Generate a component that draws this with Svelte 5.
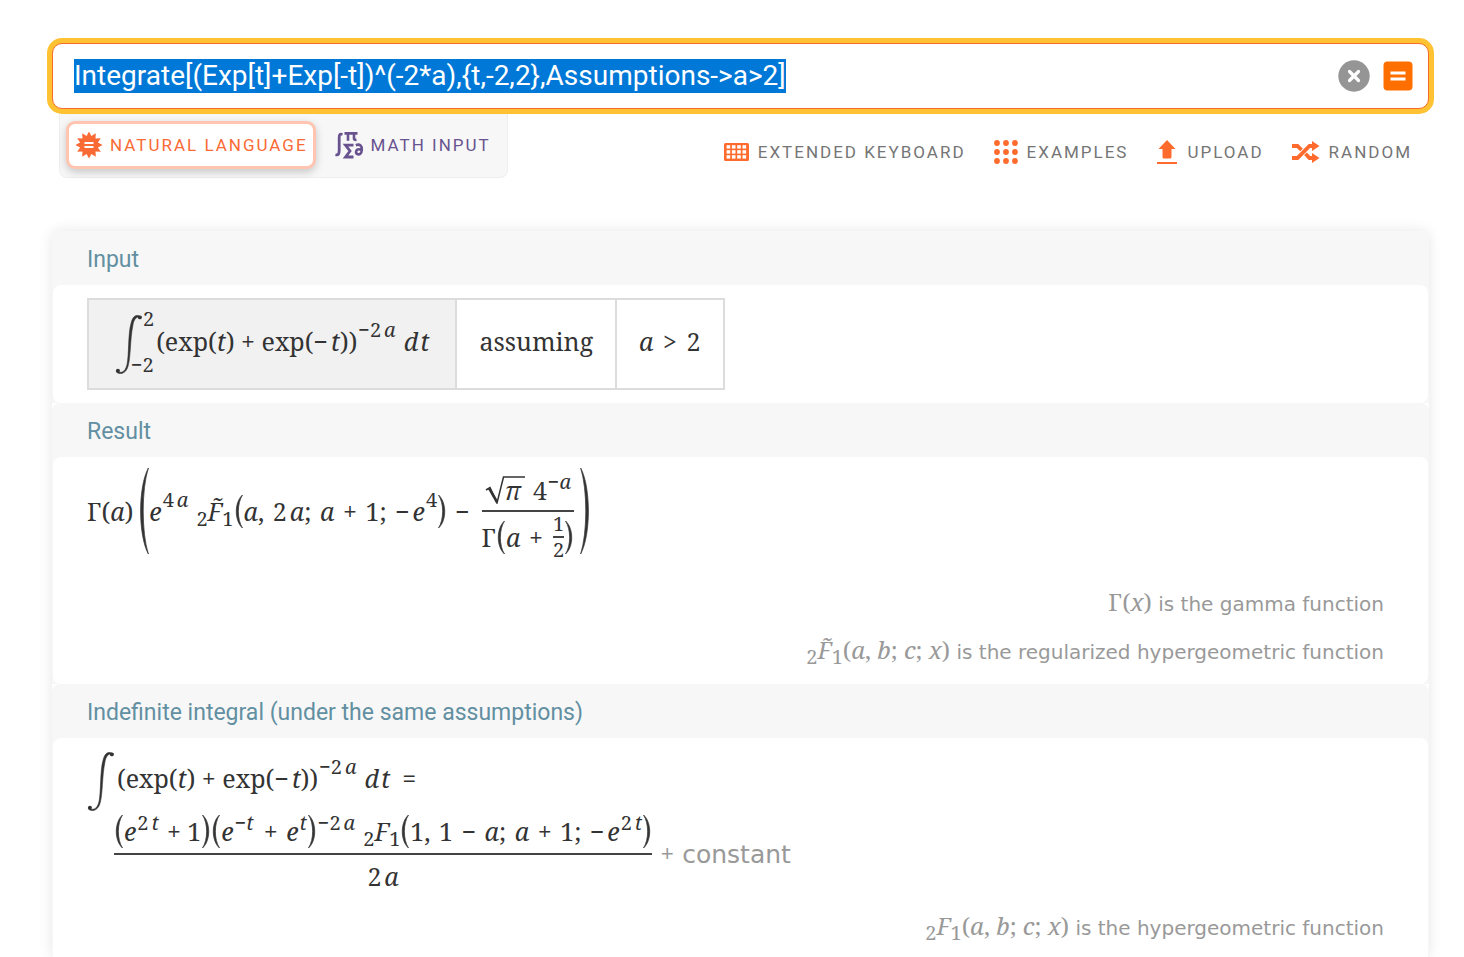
<script>
  import { onMount } from 'svelte';

  let query = $state('Integrate[(Exp[t]+Exp[-t])^(-2*a),{t,-2,2},Assumptions->a>2]');
  let field;

  // Twelve-pointed burst of the natural-language tab.
  const burst = Array.from({ length: 24 }, (_, i) => {
    const r = i % 2 ? 9.2 : 13.6;
    const t = (i * Math.PI) / 12 - Math.PI / 2;
    return `${(14 + r * Math.cos(t)).toFixed(2)},${(14 + r * Math.sin(t)).toFixed(2)}`;
  }).join(' ');

  const dots = [0, 1, 2].flatMap((r) => [0, 1, 2].map((c) => [3 + c * 9, 3 + r * 9]));
  const keys = [0, 1, 2].flatMap((r) => [0, 1, 2, 3].map((c) => [2.6 + c * 5.3, 3.2 + r * 5]));

  onMount(() => {
    field.focus();
    field.select();
  });
</script>

{#snippet integral()}
  <svg class="integral" viewBox="0 0 28 62" aria-hidden="true">
    <path d="M1 58C5 62 10 61 12 52C14 44 13 20 16 10C18 1 22 0 27 3C22 2 19 5 18 12C15 26 16 44 13 54C11 62 4 63 1 60Z" fill="currentColor" stroke="currentColor" stroke-width=".6" />
    <circle cx="2.600" cy="58.500" r="2" fill="currentColor" /><circle cx="25.200" cy="3.500" r="2" fill="currentColor" />
  </svg>
{/snippet}

{#snippet paren(side, size)}
  <svg class={['paren', side, size]} viewBox="0 0 8 32" preserveAspectRatio="none" aria-hidden="true">
    <path d="M7.500 0C-.8 7 -.8 25 7.500 32C2 24 2 8 7.500 0Z" fill="currentColor" stroke="currentColor" stroke-width=".7" vector-effect="non-scaling-stroke" />
  </svg>
{/snippet}

{#snippet integrand()}
  <span class="run">(exp(<i>t</i>) + exp(−<i class="thin">t</i>))<sup>−2<i class="thin">a</i></sup><i class="med">d</i><i class="hair">t</i></span>
{/snippet}

<main>
  <form class="search" onsubmit={(e) => e.preventDefault()}>
    <input bind:this={field} bind:value={query} type="text" aria-label="Query" spellcheck="false" />
    <button type="button" aria-label="Clear" onclick={() => (query = '')}>
      <svg width="32" height="32" viewBox="0 0 32 32"><circle cx="16" cy="16" r="15.700" fill="#959595" /><path d="M11.500 11.500L20.500 20.500M20.500 11.500L11.500 20.500" stroke="#fff" stroke-width="3.200" stroke-linecap="round" /></svg>
    </button>
    <button type="submit" aria-label="Compute">
      <svg width="30" height="30" viewBox="0 0 30 30"><rect x=".5" y=".5" width="29" height="29" rx="4" fill="#ff6f00" /><path d="M7.500 12H22.500M7.500 18H22.500" stroke="#fff" stroke-width="3" /></svg>
    </button>
  </form>

  <div class="bar">
    <div class="tabs">
      <button type="button" class="tab active">
        <svg width="28" height="28" viewBox="0 0 28 28"><polygon points={burst} fill="currentColor" /><path d="M9.500 12H18.500M9.500 16H18.500" stroke="#fff" stroke-width="1.800" /></svg>
        Natural Language
      </button>
      <button type="button" class="tab">
        <svg width="30" height="28" viewBox="0 0 30 28" fill="none" stroke="currentColor" stroke-width="2.800">
          <path d="M8.500 3.500C5.500 2.500 5.200 4 5.200 7V19C5.200 23 4.500 24.500 1.500 23.700" />
          <path d="M10.500 2.400H23.500M14 2.500V9.800M20 2.500V7.500Q20 9.200 22.500 8.800" stroke-width="2.600" />
          <path d="M19.500 14.200H11.500L16 20L11.500 26H19.500" stroke-width="2.800" />
          <path d="M21.800 14.200C26 12.500 28.200 15 27.800 19C27.500 23 25.500 23.700 23.800 23.300C21 22.500 21.800 18.300 25 18.300Q27 18.300 27.600 19.500" stroke-width="2.600" />
        </svg>
        Math Input
      </button>
    </div>
    <nav class="tools">
      <button type="button" class="tool">
        <svg width="25" height="20" viewBox="0 0 25 20"><rect y="1" width="25" height="18" rx="1.500" fill="#ff6b2c" />{#each keys as [x, y]}<rect {x} {y} width="3.600" height="3.400" fill="#fff" />{/each}</svg>
        Extended Keyboard
      </button>
      <button type="button" class="tool">
        <svg width="24" height="24" viewBox="0 0 24 24" fill="#ff6b2c">{#each dots as [cx, cy]}<circle {cx} {cy} r="2.900" />{/each}</svg>
        Examples
      </button>
      <button type="button" class="tool">
        <svg width="22" height="26" viewBox="0 0 22 26" fill="#ff6b2c"><path d="M11 1L19.500 10H15.500V18Q15.500 19.500 14 19.500H8Q6.500 19.500 6.500 18V10H2.500ZM1 23H21V25H1Z" /></svg>
        Upload
      </button>
      <button type="button" class="tool">
        <svg width="28" height="22" viewBox="0 0 28 22"><path d="M0 5H5.500L9.500 9M13.500 12.800L17.500 17H21M0 17H5.500L17.500 5H21" fill="none" stroke="#ff6b2c" stroke-width="3.800" /><path d="M20 0L27.500 5L20 10ZM20 12L27.500 17L20 22Z" fill="#ff6b2c" /></svg>
        Random
      </button>
    </nav>
  </div>

  <div class="card">
    <section>
      <h2>Input</h2>
      <div class="pod">
        <table>
          <tbody>
            <tr>
              <td class="shade">
                <span class="row">
                  {@render integral()}
                  <span class="limits"><span class="upper">2</span><span>−2</span></span>
                  {@render integrand()}
                </span>
              </td>
              <td><span class="run">assuming</span></td>
              <td><span class="run"><i>a</i> <span class="rel">&gt;</span> 2</span></td>
            </tr>
          </tbody>
        </table>
      </div>
    </section>

    <section>
      <h2>Result</h2>
      <div class="pod">
        <div class="row result">
          <span>Γ(<i>a</i>)</span>
          {@render paren('left', 'big')}
          <span><i>e</i><sup>4<i class="thin">a</i></sup><span class="med"><sub>2</sub><i>F̃</i><sub>1</sub></span></span>
          {@render paren('left', 'mid')}
          <span><i>a</i><span class="sep">,</span> 2<i class="thin">a</i><span class="sep">;</span> <i>a</i> <span class="op">+</span> 1<span class="sep">;</span> −<i class="thin">e</i><sup>4</sup></span>
          {@render paren('right', 'mid')}
          <span class="med">−</span>
          <span class="frac wide">
            <span class="num row">
              <svg class="root" viewBox="0 0 40 28" aria-hidden="true"><path d="M1 14L5 11.500L12 27L18.500 1H40" fill="none" stroke="currentColor" stroke-width="1.500" /><path d="M4 12L12 26" stroke="currentColor" stroke-width="2.600" /></svg>
              <span><i>π</i><span class="wide">4</span><sup>−<i>a</i></sup></span>
            </span>
            <span class="rule"></span>
            <span class="row">
              <span>Γ</span>
              {@render paren('left', 'mid')}
              <span><i>a</i> <span class="op">+</span></span>
              <span class="frac small med"><span>1</span><span class="rule"></span><span>2</span></span>
              {@render paren('right', 'mid')}
            </span>
          </span>
          {@render paren('right', 'big')}
        </div>
        <p class="note"><span class="sym">Γ(<i>x</i>)</span> is the gamma function</p>
        <p class="note"><span class="sym"><sub>2</sub><i>F̃</i><sub>1</sub>(<i>a</i>, <i>b</i>; <i>c</i>; <i>x</i>)</span> is the regularized hypergeometric function</p>
      </div>
    </section>

    <section>
      <h2>Indefinite integral (under the same assumptions)</h2>
      <div class="pod">
        <div class="row lead">
          {@render integral()}
          {@render integrand()}
          <span class="run wide">=</span>
        </div>
        <div class="row answer">
          <span class="frac">
            <span class="num row">
              {@render paren('left', 'mid')}
              <span><i>e</i><sup>2<i class="thin">t</i></sup><span class="med">+ 1</span></span>
              {@render paren('right', 'mid')}
              {@render paren('left', 'mid')}
              <span><i>e</i><sup>−<i>t</i></sup><span class="med"><span class="op">+</span> <i>e</i></span><sup><i>t</i></sup></span>
              {@render paren('right', 'mid')}
              <span><sup>−2<i class="thin">a</i></sup><span class="med"><sub>2</sub><i>F</i><sub>1</sub></span></span>
              {@render paren('left', 'mid')}
              <span>1<span class="sep">,</span> 1 <span class="op">−</span> <i>a</i><span class="sep">;</span> <i>a</i> <span class="op">+</span> 1<span class="sep">;</span> −<i class="thin">e</i><sup>2<i class="thin">t</i></sup></span>
              {@render paren('right', 'mid')}
            </span>
            <span class="rule"></span>
            <span>2<i class="thin">a</i></span>
          </span>
          <span class="constant"><span class="sym">+</span> constant</span>
        </div>
        <p class="note"><span class="sym"><sub>2</sub><i>F</i><sub>1</sub>(<i>a</i>, <i>b</i>; <i>c</i>; <i>x</i>)</span> is the hypergeometric function</p>
      </div>
    </section>
  </div>
</main>

<style>
  :global(body) { background: #fff; }
  main {
    box-sizing: border-box;
    min-height: 100vh;
    padding: 38px 30px 0 47px;
    display: flex;
    flex-direction: column;
    font-family: Roboto, sans-serif;
  }
  button { border: 0; background: none; padding: 0; font: inherit; color: inherit; cursor: pointer; }
  svg { display: block; flex: none; }

  .search {
    display: flex;
    align-items: center;
    gap: 13px;
    height: 64px;
    padding: 0 15px 0 21px;
    border: 1px solid #fa6a2a;
    border-radius: 10px;
    margin: 5px;
    box-shadow: 0 0 0 5px #ffc233;
    position: relative;
    background: #fff;
  }
  input {
    flex: 1;
    min-width: 0;
    border: 0;
    outline: 0;
    padding: 0;
    background: none;
    font: 28px/34px Roboto, sans-serif;
    color: #222;
  }
  input::selection { background: #0078d7; color: #fff; }

  .bar { display: flex; justify-content: space-between; align-items: flex-start; padding: 0 22px 0 12px; }
  .tabs {
    display: flex;
    gap: 18px;
    padding: 7px 16px 8px 6px;
    background: #f7f7f7;
    border: 1px solid #eee;
    border-top: 0;
    border-radius: 0 0 8px 8px;
    color: #68528f;
  }
  .tab, .tool { display: flex; align-items: center; text-transform: uppercase; font-size: 17px; letter-spacing: 2px; white-space: nowrap; }
  .tab { gap: 7px; height: 48px; }
  .active { color: #fa6a35; background: #fff; border: 3px solid #ffc5b1; border-radius: 9px; padding: 0 5px 0 6px; box-shadow: 0 3px 8px #0003; }
  .tools { display: flex; gap: 28px; padding-top: 25px; }
  .tool { gap: 9px; height: 26px; color: #757575; }

  .card { flex: 1; margin: 53px 5px 0; border-radius: 8px 8px 0 0; box-shadow: 0 0 14px #0000001a; background: #fff; }
  section { background: #f7f7f7; border-radius: 8px 8px 0 0; }
  h2 { margin: 0; padding: 3px 35px 0; font: 23px/51px Roboto, sans-serif; color: #628fa1; }
  .pod { background: #fff; border-radius: 8px; padding: 13px 44px 8px 34px; font: 25px/32px "Noto Serif", "Liberation Serif", serif; color: #333; margin: 0 1px; }
  section:last-child .pod { padding-bottom: 5px; border-radius: 8px 8px 0 0; }

  table { border-collapse: collapse; margin-bottom: 5px; }
  td { height: 88px; border: 2px solid #dcdcdc; padding: 0 22px; }
  .shade { background: #f1f1f1; padding: 0 26px; }

  .row { display: flex; align-items: center; white-space: nowrap; }
  .run { display: block; margin-bottom: 6px; white-space: nowrap; }
  .hair { margin-left: 2px; }
  .thin { margin-left: 3px; }
  .med { margin-left: 8px; }
  .wide { margin-left: 12px; }
  .op { margin: 0 2px; }
  .rel { margin: 0 3px; }
  .sep { margin-right: 2px; }
  sup, sub { font-size: 20px; line-height: 0; }
  sup { vertical-align: 14px; margin-left: 1px; }
  sub { vertical-align: -5px; }
  .num sup { vertical-align: 11px; }
  .integral { width: 28px; height: 60px; }
  .lead .integral { margin-right: 2px; }
  .limits { display: flex; flex-direction: column; justify-content: space-between; height: 66px; margin: 0 2px 4px -12px; font-size: 20px; line-height: 20px; }
  .upper { padding-left: 12px; }

  .paren { width: 8px; margin: 0 1px; }
  .right { transform: scaleX(-1); }
  .mid { height: 33px; }
  .big { width: 10px; height: 86px; margin: 0 0 0 6px; }
  .result { height: 82px; margin-bottom: 28px; }
  .frac { display: inline-grid; grid-template-rows: 1fr auto 1fr; justify-items: center; }
  .rule { width: 100%; height: 2px; background: #444; }
  .num { align-self: end; }
  .result .num { height: 40px; }
  .root { width: 40px; height: 28px; margin-right: -20px; }
  .small { font-size: 20px; line-height: 24px; }

  .answer { padding-left: 27px; margin-bottom: 7px; }
  .answer .frac { line-height: 42px; }
  .answer .num { padding-bottom: 2px; line-height: 40px; }
  .constant { margin-left: 8px; font: 25px/32px "DejaVu Sans", sans-serif; color: #999; }
  .note { margin: 0; text-align: right; font: 20px/48px "DejaVu Sans", sans-serif; color: #999; }
  .sym { font-family: "Noto Serif", "Liberation Serif", serif; }
  .note .sym { font-size: 24px; line-height: 0; }
</style>
